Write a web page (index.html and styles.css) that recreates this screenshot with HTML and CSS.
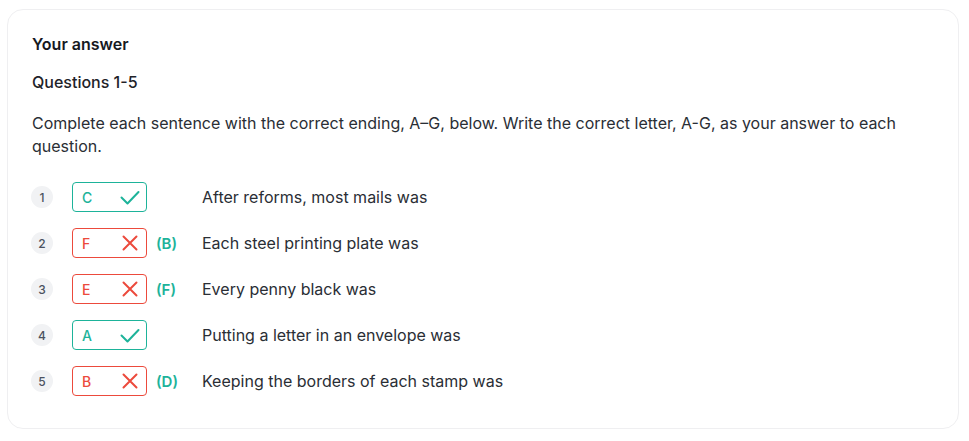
FILE: index.html
```html
<!DOCTYPE html>
<html lang="en">

<head>
    <meta charset="UTF-8">
    <meta name="viewport" content="width=device-width, initial-scale=1.0">
    <title>Your answer</title>
    <link rel="stylesheet" href="styles.css">
</head>

<body>
    <div class="card">
        <h2 class="title">Your answer</h2>
        <h3 class="subtitle">Questions 1-5</h3>
        <p class="instructions">Complete each sentence with the correct ending, A–G, below. Write the correct letter, A-G, as your answer to each question.</p>

        <ul class="answers">
            <li class="row">
                <span class="num">1</span>
                <span class="box correct">C
                    <svg viewBox="0 0 24 24"><path d="M3.5 12.5l6 6L20.5 7"/></svg>
                </span>
                <span class="key"></span>
                <span class="sentence">After reforms, most mails was</span>
            </li>
            <li class="row">
                <span class="num">2</span>
                <span class="box wrong">F
                    <svg viewBox="0 0 24 24"><path d="M5.5 5.5l13 13M18.5 5.5l-13 13"/></svg>
                </span>
                <span class="key">(B)</span>
                <span class="sentence">Each steel printing plate was</span>
            </li>
            <li class="row">
                <span class="num">3</span>
                <span class="box wrong">E
                    <svg viewBox="0 0 24 24"><path d="M5.5 5.5l13 13M18.5 5.5l-13 13"/></svg>
                </span>
                <span class="key">(F)</span>
                <span class="sentence">Every penny black was</span>
            </li>
            <li class="row">
                <span class="num">4</span>
                <span class="box correct">A
                    <svg viewBox="0 0 24 24"><path d="M3.5 12.5l6 6L20.5 7"/></svg>
                </span>
                <span class="key"></span>
                <span class="sentence">Putting a letter in an envelope was</span>
            </li>
            <li class="row">
                <span class="num">5</span>
                <span class="box wrong">B
                    <svg viewBox="0 0 24 24"><path d="M5.5 5.5l13 13M18.5 5.5l-13 13"/></svg>
                </span>
                <span class="key">(D)</span>
                <span class="sentence">Keeping the borders of each stamp was</span>
            </li>
        </ul>
    </div>
</body>

</html>
```

FILE: styles.css
```css
html {
    font-family: Inter, 'Noto Sans', Arial, sans-serif;
    color: #1f2329;
}

body {
    margin: 0;
    padding: 9px 10px 0 7px;
    background: #ffffff;
}

.card {
    border: 1px solid #efeff1;
    border-radius: 16px;
    padding: 22px 24px 20px 24px;
    height: 420px;
    box-sizing: border-box;
}

.title {
    margin: 0;
    font-size: 16px;
    line-height: 24px;
    font-weight: 600;
    color: #16191f;
}

.subtitle {
    margin: 14px 0 0 0;
    font-size: 16px;
    line-height: 24px;
    font-weight: 500;
    color: #1f2329;
}

.instructions {
    margin: 18px 0 0 0;
    font-size: 16px;
    line-height: 23px;
    color: #2a2e35;
}

.answers {
    list-style: none;
    margin: 24px 0 0 0;
    padding: 0;
    display: flex;
    flex-direction: column;
    gap: 16px;
}

.row {
    display: flex;
    align-items: center;
    height: 30px;
}

.num {
    width: 22px;
    height: 22px;
    margin-left: -1px;
    border-radius: 50%;
    background: #f1f2f4;
    color: #4b5260;
    font-size: 12px;
    font-weight: 500;
    display: flex;
    align-items: center;
    justify-content: center;
}

.box {
    margin-left: 19px;
    width: 75px;
    height: 30px;
    box-sizing: border-box;
    border: 1px solid;
    border-radius: 4px;
    padding: 0 4px 0 9px;
    display: flex;
    align-items: center;
    justify-content: space-between;
    font-size: 14px;
    font-weight: 500;
}

.box svg {
    width: 24px;
    height: 24px;
    fill: none;
    stroke: currentColor;
    stroke-width: 2;
    stroke-linecap: round;
    stroke-linejoin: round;
}

.box.correct {
    color: #1db39a;
    border-color: #1db39a;
}

.box.wrong {
    color: #ec4a3c;
    border-color: #ec4a3c;
}

.key {
    width: 46px;
    padding-left: 9px;
    color: #1db39a;
    font-size: 15px;
    font-weight: 600;
}

.sentence {
    font-size: 16px;
    color: #2a2e35;
}
```
